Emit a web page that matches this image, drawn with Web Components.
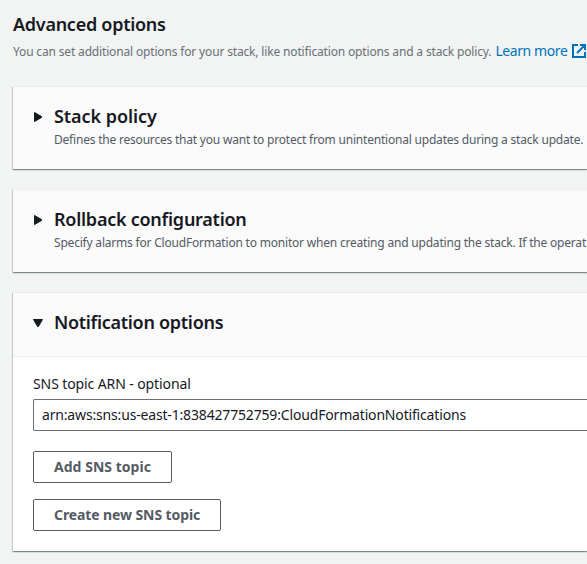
<!DOCTYPE html>
<html lang="en">
<head>
<meta charset="utf-8">
<title>Advanced options</title>
<style>
html, body { margin: 0; height: 100%; }
body { background: #f2f3f3; color: #16191f; font: 14px/22px "Noto Sans", "Open Sans", sans-serif; overflow: hidden; }
</style>
</head>
<body>
<options-page>
  <page-intro>
    <span slot="title">Advanced options</span>
    <span slot="description">You can set additional options for your stack, like notification options and a stack policy.</span>
    <external-link slot="link">Learn more</external-link>
  </page-intro>
  <expandable-card style="--track: -0.06px; --desc-track: -0.205px">
    <span slot="title">Stack policy</span>
    <span slot="description">Defines the resources that you want to protect from unintentional updates during a stack update.</span>
  </expandable-card>
  <expandable-card style="--track: -0.25px; --desc-track: -0.2px">
    <span slot="title">Rollback configuration</span>
    <span slot="description">Specify alarms for CloudFormation to monitor when creating and updating the stack. If the operat</span>
  </expandable-card>
  <expandable-card open style="--track: -0.29px">
    <span slot="title">Notification options</span>
    <text-field value="arn:aws:sns:us-east-1:838427752759:CloudFormationNotifications">SNS topic ARN - optional</text-field>
    <outline-button style="letter-spacing: .03px; --w: 139px">Add SNS topic</outline-button>
    <outline-button style="letter-spacing: -.1px; --w: 188px">Create new SNS topic</outline-button>
  </expandable-card>
</options-page>
<script>
const define = (name, html) => customElements.define(name, class extends HTMLElement {
  connectedCallback() {
    if (this.shadowRoot) return;
    this.attachShadow({ mode: 'open' }).innerHTML = html;
    const value = this.shadowRoot.querySelector('.value');
    if (value) value.textContent = this.getAttribute('value');
  }
});

define('options-page', `<style>
  :host { display: flex; flex-direction: column; gap: 20px; box-sizing: border-box; width: 100%; padding: 13px 0 0 13px; }
</style><slot></slot>`);

define('page-intro', `<style>
  :host { display: block; height: 53px; white-space: nowrap; }
  h1 { margin: 0 0 5px; font-size: 18px; line-height: 22px; font-weight: 600; letter-spacing: -.27px; }
  .row { display: flex; align-items: baseline; gap: 4px; line-height: 22px; }
  .desc { font-size: 12px; color: #687078; letter-spacing: -.16px; }
</style><h1><slot name="title"></slot></h1><div class="row"><span class="desc"><slot name="description"></slot></span><slot name="link"></slot></div>`);

define('external-link', `<style>
  :host { display: inline-flex; align-items: center; gap: 5px; color: #0073bb; letter-spacing: -.41px; }
  svg { display: block; flex: none; }
</style><slot></slot><svg width="14" height="14" viewBox="0 0 14 14" fill="none" stroke="currentColor" stroke-width="2"><path d="M6 1H1V13H13V8M8 1H13V6M13 1L5 9"/></svg>`);

define('expandable-card', `<style>
  :host { display: block; border-top: 1px solid #eaeded; background: #fff;
    box-shadow: 0 1px 1px 0 rgba(0,28,36,.3), 1px 1px 1px 0 rgba(0,28,36,.15), -1px 1px 1px 0 rgba(0,28,36,.15); white-space: nowrap; }
  header { display: grid; grid-template-columns: 10px auto; column-gap: 11px; justify-content: start; align-content: start; box-sizing: border-box; height: 82px; padding: 18px 0 18px 20px; background: #fafafa; }
  svg { width: 10px; height: 10px; margin-top: 7px; }
  h2 { margin: 0; font-size: 18px; line-height: 22px; font-weight: 600; letter-spacing: var(--track, 0); }
  p { margin: 2px 0 0; grid-column: 2; font-size: 12px; line-height: 22px; color: #545b64; letter-spacing: var(--desc-track, 0); }
  .body { display: none; }
  :host([open]) header { height: 64px; border-bottom: 1px solid #eaeded; }
  :host([open]) svg { transform: rotate(90deg); }
  :host([open]) p { display: none; }
  :host([open]) .body { display: flex; flex-direction: column; align-items: flex-start; gap: 16px; padding: 16px 0 20px 20px; }
</style>
<header><svg viewBox="0 0 10 10"><path fill="#16191f" stroke="#16191f" stroke-linejoin="round" d="M1.5 .5V9.5L8.6 5.4V4.6Z"/></svg><h2><slot name="title"></slot></h2><p><slot name="description"></slot></p></header>
<div class="body"><slot></slot></div>`);

define('text-field', `<style>
  :host { display: block; align-self: stretch; margin-bottom: 4px; }
  label { display: block; margin-bottom: 4px; letter-spacing: -.1px; }
  .value { box-sizing: border-box; height: 32px; padding: 4px 8px; border: 1px solid #687078; border-right: 0; border-radius: 2px 0 0 2px; background: #fff; letter-spacing: -.168px; }
</style><label><slot></slot></label><div class="value"></div>`);

define('outline-button', `<style>
  :host { display: block; }
  button { all: unset; display: block; box-sizing: border-box; width: var(--w); height: 32px; padding: 4px 20px; border: 1px solid #545b64; border-radius: 2px; background: #fff; color: #545b64; font-weight: 700; line-height: 22px; }
</style><button><slot></slot></button>`);
</script>
</body>
</html>
